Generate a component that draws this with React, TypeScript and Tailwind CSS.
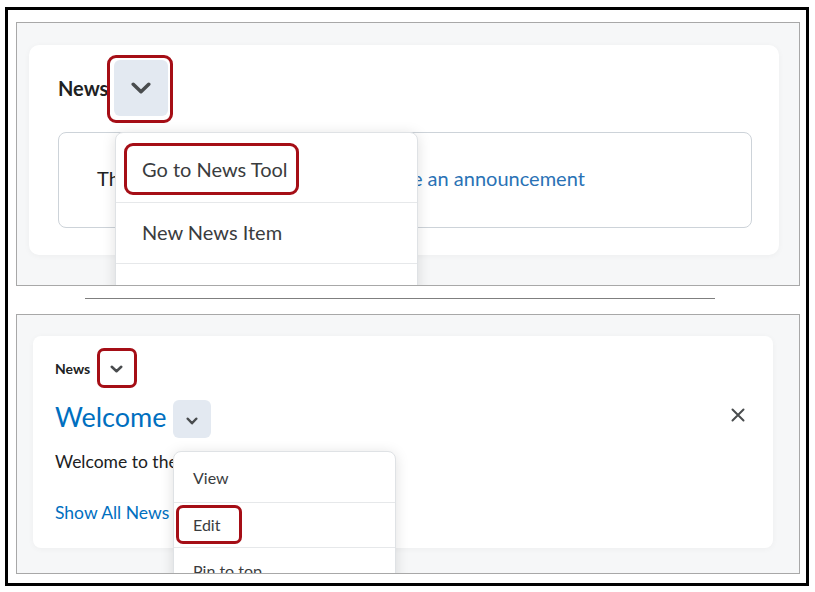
import React from "react";

const RED = "border-[#a50e16]";

function Chevron({ w, h, sw }: { w: number; h: number; sw: number }) {
  return (
    <svg width={w} height={h} viewBox={`0 0 ${w} ${h}`} fill="none">
      <polyline
        points={`${sw / 2 + 0.5},${sw / 2 + 0.5} ${w / 2},${h - sw / 2 - 0.5} ${w - sw / 2 - 0.5},${sw / 2 + 0.5}`}
        stroke="#494c4e"
        strokeWidth={sw}
        strokeLinecap="round"
        strokeLinejoin="round"
      />
    </svg>
  );
}

export default function App() {
  return (
    <div
      className="w-[815px] h-[592px] bg-white overflow-hidden"
      style={{ fontFamily: "Lato, 'Noto Sans', sans-serif" }}
    >
      <div className="ml-[5px] mt-[7px] w-[804px] h-[579px] border-[3px] border-black flex flex-col pt-[12px] pl-[8px]">
        {/* Panel 1 */}
        <div className="w-[784px] h-[264px] border border-[#a8a8a8] bg-[#f6f7f8] overflow-hidden pt-[22px] pl-[12px]">
          <div className="relative w-[750px] h-[210px] bg-white rounded-[10px] shadow-[0_1px_6px_rgba(0,0,0,0.04)] pt-[15px] pl-[29px]">
            <div className="flex items-center h-[56px]">
              <span className="text-[20px] font-bold text-[#202122] leading-none">News</span>
              <div className="ml-[6px] w-[54px] h-[56px] rounded-md bg-[#e3e9f1] flex items-center justify-center">
                <Chevron w={20} h={12} sw={3.5} />
              </div>
            </div>
            <div className="mt-[16px] w-[694px] h-[96px] border border-[#cdd3d9] rounded-lg flex items-center pl-[38px] pb-[4px]">
              <span className="text-[20px] text-[#202122] whitespace-nowrap">
                There are not any news items.{" "}
                <span className="text-[#2a72b5]">Create an announcement</span>
              </span>
            </div>
            {/* red outline around header button */}
            <div className={`absolute left-[78px] top-[10px] w-[66px] h-[68px] border-[3px] ${RED} rounded-[9px]`} />
            {/* Menu 1 */}
            <div className="absolute left-[86px] top-[87px] w-[303px] bg-white border border-[#dfe2e5] rounded-t-lg shadow-[0_2px_14px_rgba(0,0,0,0.13)]">
              <div className="relative h-[70px] pt-[2px] pl-[26px] flex items-center border-b border-[#e6e8ea] text-[20px] text-[#3a3c3e]">
                Go to News Tool
                <div className={`absolute left-[8px] top-[10px] w-[175px] h-[52px] border-[3px] ${RED} rounded-[9px]`} />
              </div>
              <div className="h-[61px] pb-[2px] pl-[26px] flex items-center border-b border-[#e6e8ea] text-[20px] text-[#3a3c3e]">
                New News Item
              </div>
              <div className="h-[61px] pl-[26px] flex items-center text-[20px] text-[#3a3c3e]">
                Delete
              </div>
            </div>
          </div>
        </div>

        {/* separator */}
        <div className="mt-[12px] ml-[69px] w-[630px] h-px bg-[#7f7f7f]" />

        {/* Panel 2 */}
        <div className="mt-[15px] w-[784px] h-[260px] border border-[#a8a8a8] bg-[#f6f7f8] overflow-hidden pt-[21px] pl-[16px]">
          <div className="relative w-[740px] h-[212px] bg-white rounded-[8px] shadow-[0_1px_6px_rgba(0,0,0,0.04)] pt-[19px] pl-[22px]">
            <div className="flex items-center h-[28px]">
              <span className="text-[14px] font-bold text-[#202122] leading-none">News</span>
              <div className="ml-[13px] w-[26px] h-[28px] flex items-center justify-center">
                <Chevron w={13} h={8} sw={2.5} />
              </div>
            </div>
            <div className="mt-[17px] flex items-center h-[38px]">
              <span className="text-[27px] text-[#006fbf] leading-none mb-[6px]">Welcome</span>
              <div className="ml-[7px] w-[38px] h-[38px] rounded-md bg-[#e3e9f1] flex items-center justify-center pt-[4px]">
                <Chevron w={12} h={8} sw={2.5} />
              </div>
              <div className="ml-auto mr-[28px] mb-[8px]">
                <svg width="14" height="14" viewBox="0 0 14 14" fill="none">
                  <path d="M1.5 1.5 L12.5 12.5 M12.5 1.5 L1.5 12.5" stroke="#494c4e" strokeWidth="2" strokeLinecap="round" />
                </svg>
              </div>
            </div>
            <div className="mt-[12px] text-[17.5px] leading-[24px] text-[#202122]">Welcome to the course!</div>
            <div className="mt-[27px] text-[17.5px] leading-[24px] text-[#006fbf]">Show All News</div>
            {/* red outline around small chevron */}
            <div className={`absolute left-[64px] top-[12px] w-[40px] h-[40px] border-[3px] ${RED} rounded-[7px]`} />
            {/* Menu 2 */}
            <div className="absolute left-[140px] top-[115px] w-[223px] bg-white border border-[#dfe2e5] rounded-t-lg shadow-[0_2px_14px_rgba(0,0,0,0.13)]">
              <div className="h-[51px] pt-[1px] pl-[19px] flex items-center border-b border-[#e6e8ea] text-[16px] text-[#3a3c3e]">
                View
              </div>
              <div className="relative h-[45px] pl-[19px] flex items-center border-b border-[#e6e8ea] text-[16px] text-[#3a3c3e]">
                Edit
                <div className={`absolute left-[2px] top-[2px] w-[66px] h-[39px] border-[3px] ${RED} rounded-[7px]`} />
              </div>
              <div className="h-[45px] pl-[19px] flex items-center text-[16px] text-[#3a3c3e]">
                Pin to top
              </div>
            </div>
          </div>
        </div>
      </div>
    </div>
  );
}
